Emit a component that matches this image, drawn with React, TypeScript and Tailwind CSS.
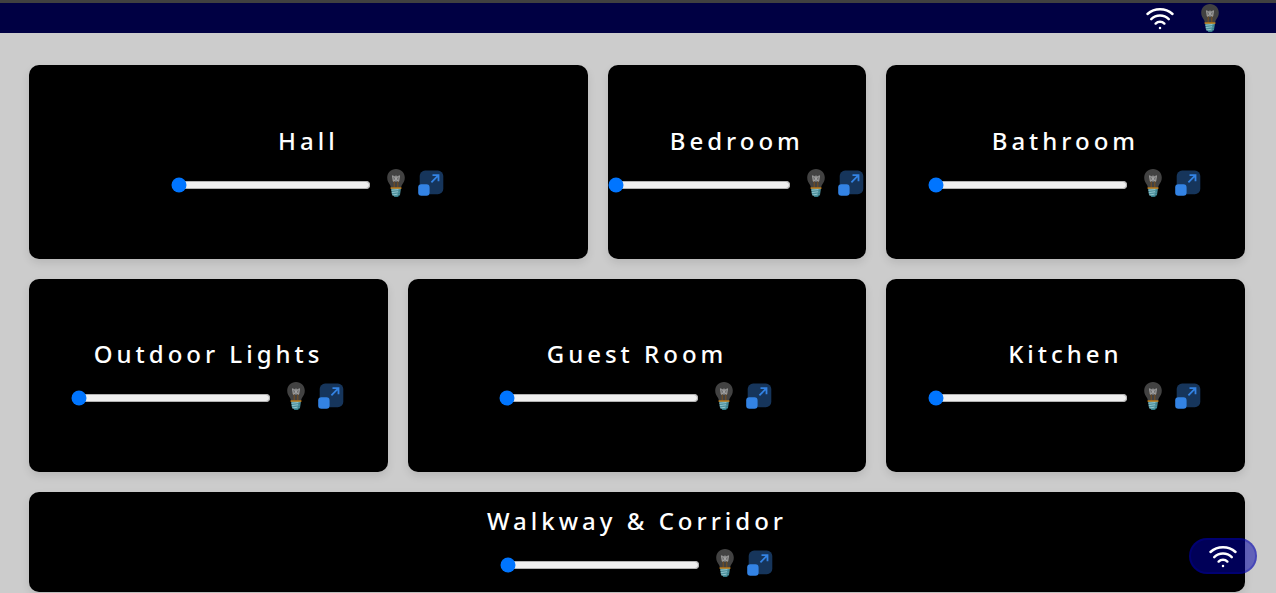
import { useState } from "react";
import { Wifi } from "lucide-react";

function Bulb() {
  return (
    <svg viewBox="0 0 30 30" className="block size-[30px] shrink-0" aria-hidden="true">
      <path
        d="M15 1C9.900 1 6.200 4.900 6.200 9.700c0 3.200 1.500 5 2.700 7 .8 1.400 1 2.600 1.200 3.600h9.800c.2-1 .4-2.200 1.200-3.600 1.200-2 2.700-3.800 2.700-7C23.800 4.900 20.100 1 15 1z"
        fill="#424242"
      />
      <path d="M13.200 19.500V14l-1.400-2M16.800 19.500V14l1.400-2" stroke="#8a5414" strokeWidth="0.800" fill="none" />
      <path d="M11.500 8h7l-.5 5.500h-6z" fill="#6f6f6f" />
      <path
        d="M11.500 7.800l.8 5.200M18.500 7.800l-.8 5.200M12.500 8.200l2.500 2.300 2.500-2.300M13 13l2-2.500 2 2.500M15 7.800v5.400"
        stroke="#aeaeae"
        strokeWidth="0.800"
        strokeLinecap="round"
        strokeLinejoin="round"
        fill="none"
      />
      <path d="M10 20h10l-.9 6.200c-.2 1-1 1.300-1.700 1.600-.4.900-1.200 1.200-2.400 1.200s-2-.3-2.400-1.200c-.7-.3-1.500-.6-1.700-1.600z" fill="#4f919d" />
      <path d="M10.400 22.300l7-.8M10.700 24.700l6.500-1M11.400 27l5-.8" stroke="#9fd0d8" strokeWidth="0.800" />
      <path d="M13.500 28.500h3l2-1.200M17.500 23.200l1.500-.5M17.300 25.800l1.600-.6" stroke="#2c7883" strokeWidth="0.900" fill="none" />
      <path d="M9.500 19.400h11v1.300h-11z" fill="#d9850f" />
    </svg>
  );
}

function Expand() {
  return (
    <svg viewBox="0 0 30 30" className="block size-[30px] shrink-0" aria-hidden="true">
      <rect x="3.700" y="2.600" width="23.600" height="23.600" rx="5.500" fill="#16355b" />
      <rect x="2.200" y="16.200" width="11.400" height="11.600" rx="3.200" fill="#3383e4" />
      <path d="M15.400 14.300 22 7.700M16.500 7.200h6v6" fill="none" stroke="#3383e4" strokeWidth="1.800" />
    </svg>
  );
}

function RoomCard({ id, name, span }: { id: string; name: string; span: string }) {
  const [level, setLevel] = useState(0);
  return (
    <section
      className={`flex min-w-0 flex-col items-center justify-center gap-[9px] rounded-[10px] bg-black shadow-[0_4px_8px_rgba(0,0,0,0.1)] ${span}`}
    >
      <label htmlFor={id} className="text-2xl leading-9 font-medium tracking-[4px] text-white">
        {name}
      </label>
      <div className="flex max-w-full items-center">
        <input
          id={id}
          type="range"
          min={0}
          max={100}
          value={level}
          onChange={(e) => setLevel(Number(e.target.value))}
          className="h-4 w-[200px] min-w-0 shrink"
        />
        <div className="mb-1 ml-[10px] flex shrink-0 gap-[5px]">
          <button type="button" aria-label={`Toggle ${name}`}>
            <Bulb />
          </button>
          <button type="button" aria-label={`Expand ${name}`}>
            <Expand />
          </button>
        </div>
      </div>
    </section>
  );
}

const rooms = [
  { id: "hall", name: "Hall", span: "col-span-2" },
  { id: "bedroom", name: "Bedroom", span: "col-span-1" },
  { id: "bathroom", name: "Bathroom", span: "col-span-1" },
  { id: "outdoor", name: "Outdoor Lights", span: "col-span-1" },
  { id: "guest", name: "Guest Room", span: "col-span-2" },
  { id: "kitchen", name: "Kitchen", span: "col-span-1" },
  { id: "walkway", name: "Walkway & Corridor", span: "col-span-4" },
];

export default function App() {
  return (
    <div className="min-h-screen bg-[#cccccc] font-['Noto_Sans',sans-serif]">
      <header className="flex items-center justify-end gap-5 border-t-[3px] border-[#404040] bg-[#000043] pr-[51px]">
        <Wifi size={30} color="white" />
        <button type="button" aria-label="Toggle all lights">
          <Bulb />
        </button>
      </header>
      <main className="grid grid-cols-[2fr_1fr_258px_2fr] grid-rows-[minmax(194px,auto)_minmax(193px,auto)_minmax(100px,auto)] gap-5 pt-8 pr-[31px] pb-px pl-[29px]">
        {rooms.map((room) => (
          <RoomCard key={room.id} {...room} />
        ))}
      </main>
      <button
        type="button"
        aria-label="Connection"
        className="fixed right-[19px] bottom-[19px] flex h-9 items-center rounded-full border-2 border-[rgba(0,0,180,0.28)] bg-[rgba(0,0,169,0.52)] px-[17px]"
      >
        <Wifi size={30} color="white" />
      </button>
    </div>
  );
}
